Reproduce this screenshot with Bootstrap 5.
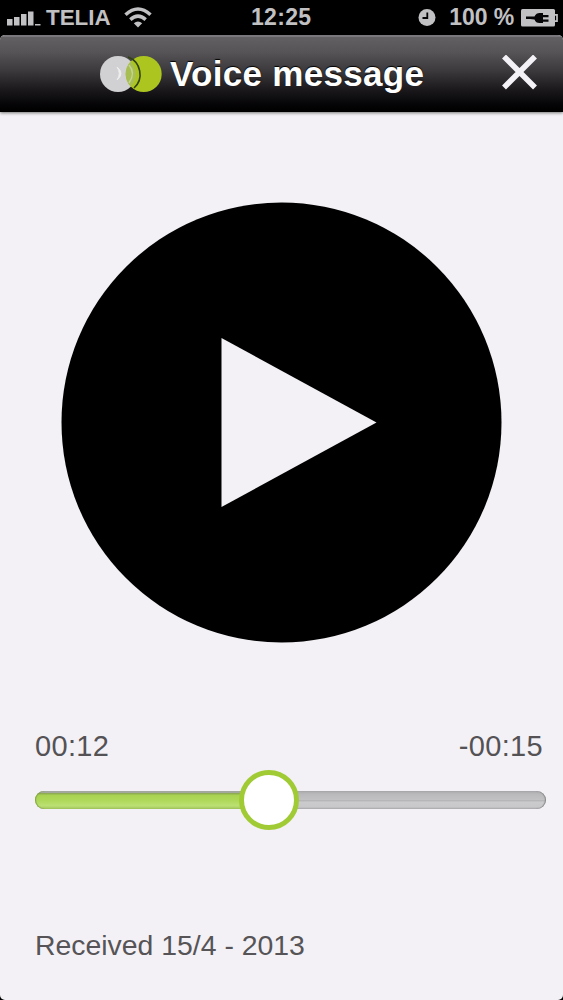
<!DOCTYPE html>
<html lang="en">
<head>
<meta charset="utf-8">
<meta name="viewport" content="width=device-width, initial-scale=1">
<title>Voice message</title>
<link href="https://cdn.jsdelivr.net/npm/bootstrap@5.3.0/dist/css/bootstrap.min.css" rel="stylesheet">
<style>
body{background:#000;font-family:"Liberation Sans",Arial,sans-serif;height:1000px;overflow:hidden}
svg{display:block;flex:none}
.phone{height:1000px}
.statusbar{height:35px;color:#c1c0c3;font-size:23px;font-weight:700;line-height:35px;display:grid;grid-template-columns:244px 80px 1fr;padding:0 5px 0 7px}
.clock{letter-spacing:.3px}
.carrier{font-size:22.4px;margin:0 13px 0 5px}
.screen{background:#f3f1f5;border-radius:5px;overflow:hidden}
.titlebar{height:77px;background:linear-gradient(#626063 0,#565457 20%,#3b393c 45%,#1b191c 70%,#050406 90%,#000);border-top:2px solid #79777b;box-shadow:0 1px 3px #777;padding:0 26px 3px 100px}
.titlebar h1{font-size:35px;font-weight:700;line-height:40px;color:#fff;text-shadow:0 -1px 1px #000;letter-spacing:.3px;padding-top:1px}
.logo{margin-top:2px}
.play-wrap{margin-top:90px}
.times{margin:86px 20px 0 35px;font-size:29px;line-height:34px;color:#545255;letter-spacing:.35px}
.slider{margin:7px 17px 0 35px;height:60px}
.track{height:18px;border-radius:9px;background:linear-gradient(#aaa9ab 0,#b9b8ba 18%,#c2c1c3 50%,#b5b4b6 53%,#cbcacc 62%,#c8c7c9 88%,#adacae);box-shadow:inset -1px 0 1px #858487}
.played{height:18px;border-radius:9px 0 0 9px;background:linear-gradient(#a9a6af 0,#a2a99a 10%,#8eac50 14%,#a9d251 24%,#afd95b 55%,#bce073 82%,#a1c45c);box-shadow:inset 1px 0 1px #81a441}
.knob{width:60px;height:60px;border:5px solid #a0cb35;background:#fff;top:0;transform:translateX(-50%)}
.received{margin:98px 0 0 35px;font-size:28.4px;line-height:34px;color:#565457}
</style>
</head>
<body>
<main class="phone d-flex flex-column">
  <div class="statusbar">
    <div class="d-flex align-items-center">
      <svg width="34" height="18" viewBox="0 0 34 18" fill="#c1c0c3"><path d="M0 10h5.500v6.500H0zM7 8h5.500v8.500H7zM14 5h5.500v11.500H14zM21 2.500h5.500v14H21zM28 15h5.500v1.500H28z"/></svg>
      <span class="carrier">TELIA</span>
      <svg width="28" height="21" viewBox="0 0 28 21" fill="none" stroke="#c1c0c3" stroke-width="3.500"><path d="M1.500 7.800Q14-3.800 26.500 7.800M6.300 12.600q7.700-7 15.400 0"/><path d="M9.800 16.300q4.200-3.700 8.400 0L14 20.500z" fill="#c1c0c3" stroke="none"/></svg>
    </div>
    <div class="clock">12:25</div>
    <div class="d-flex align-items-center justify-content-end">
      <svg width="18" height="18" viewBox="0 0 18 18"><circle cx="9" cy="8.500" r="8.500" fill="#c1c0c3"/><path d="M9.300 3.500v5.500H4.500" fill="none" stroke="#050406" stroke-width="1.800"/></svg>
      <span style="margin:0 7px 0 13px;letter-spacing:-.1px">100 %</span>
      <svg width="37" height="18" viewBox="0 0 37 18"><rect width="34" height="17.500" rx="1.500" fill="#c1c0c3"/><path d="M34 5.800h2v6.400h-2" fill="none" stroke="#c1c0c3" stroke-width="1.700"/><path d="M5 7.500h8.500c1-2.500 3-3.500 5-3.500H22v2h5.500v2.200H22v2.300h5.500v2.200H22V14h-3.500c-2.500 0-4.200-1-5-3.500L9 10H5z" fill="#050406"/></svg>
    </div>
  </div>
  <section class="screen flex-grow-1">
    <header class="titlebar d-flex align-items-center">
      <svg class="logo" width="62" height="38" viewBox="0 0 62 38"><circle cx="18" cy="19" r="18" fill="#d1d0d2"/><circle cx="43.700" cy="19" r="18" fill="#acc61f"/><path d="M30.800 6.400a18 18 0 0 1 0 25.200 18 18 0 0 1 0-25.200z" fill="#a7be54"/><path d="M28 2a18.500 18.500 0 0 1 6 31" fill="none" stroke="#304312" stroke-width="1.600"/><path d="M29 10q7 8 0 18" fill="none" stroke="#c4d38d" stroke-width="1.500"/><path d="M17 12q8 6.500 0 13 4.500-6.500 0-13z" fill="#eee" stroke="#eee"/></svg>
      <h1 class="m-0 ms-2 text-nowrap">Voice message</h1>
      <button class="btn p-0 border-0 ms-auto" aria-label="Close"><svg width="35" height="36" viewBox="0 0 35 36"><path d="M2 1.500l31 31M33 1.500L2 32.500" stroke="#f4f2f6" stroke-width="5.500"/></svg></button>
    </header>
    <div class="play-wrap d-flex justify-content-center">
      <button class="btn p-0 border-0 rounded-circle" aria-label="Play"><svg width="441" height="441" viewBox="0 0 441 441"><circle cx="220.500" cy="220.500" r="220"/><path d="M160.500 136l155 84.500-155 84.500z" fill="#f3f1f5"/></svg></button>
    </div>
    <div class="times d-flex justify-content-between"><span>00:12</span><span>-00:15</span></div>
    <div class="slider position-relative d-flex align-items-center">
      <div class="track w-100"><div class="played" style="width:45.700%"></div></div>
      <div class="knob rounded-circle position-absolute" style="left:45.700%"></div>
    </div>
    <p class="received mb-0">Received 15/4 - 2013</p>
  </section>
</main>
<script src="https://cdn.jsdelivr.net/npm/bootstrap@5.3.0/dist/js/bootstrap.bundle.min.js"></script>
</body>
</html>
